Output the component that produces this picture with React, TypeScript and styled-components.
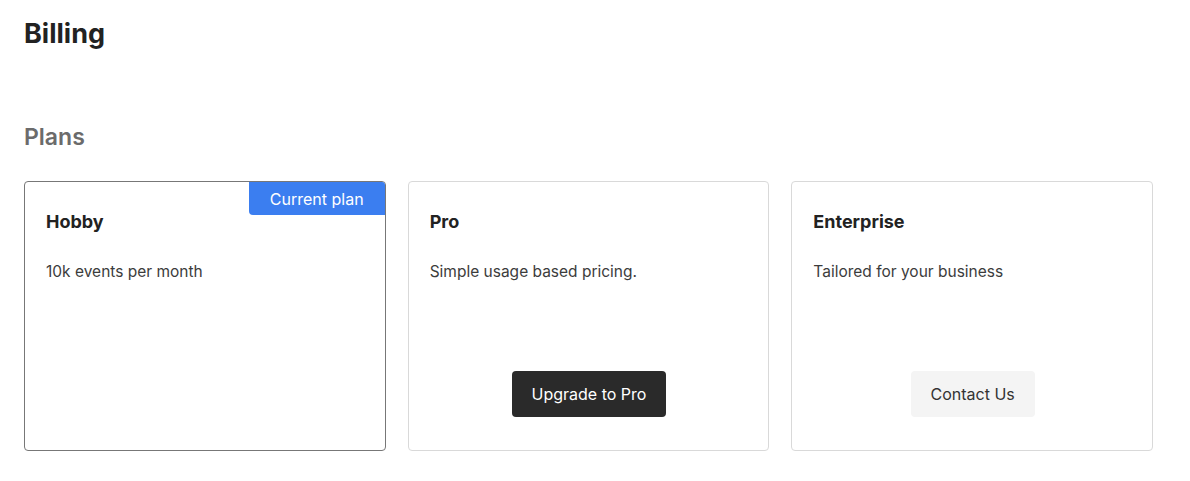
import React from 'react';
import styled, { createGlobalStyle } from 'styled-components';

const GlobalStyle = createGlobalStyle`
  * {
    box-sizing: border-box;
  }
  body {
    margin: 0;
    background: #ffffff;
    font-family: Inter, 'Noto Sans', sans-serif;
    color: #222222;
  }
`;

const Page = styled.main`
  padding: 18px 37px 24px 24px;
`;

const Title = styled.h1`
  margin: 0;
  font-size: 27px;
  font-weight: 700;
  line-height: 32px;
  color: #222222;
`;

const SectionTitle = styled.h2`
  margin: 71px 0 0;
  font-size: 23px;
  font-weight: 600;
  line-height: 32px;
  color: #6b6b6b;
`;

const PlanGrid = styled.div`
  display: grid;
  grid-template-columns: repeat(3, 1fr);
  gap: 22px;
  margin-top: 28px;
`;

const Card = styled.div<{ $current?: boolean }>`
  position: relative;
  display: flex;
  flex-direction: column;
  height: 270px;
  padding: 28px 20px 33px 21px;
  border: 1px solid ${(p) => (p.$current ? '#777777' : '#d9d9d9')};
  border-radius: 4px;
  background: #ffffff;
`;

const Badge = styled.div`
  position: absolute;
  top: 0;
  right: 0;
  padding: 7px 21px 6px 21px;
  background: #3b7ef0;
  color: #ffffff;
  font-size: 16px;
  line-height: 20px;
  border-radius: 0 3px 0 4px;
`;

const PlanName = styled.h3`
  margin: 0;
  font-size: 18px;
  font-weight: 700;
  line-height: 24px;
  color: #222222;
`;

const PlanText = styled.p`
  margin: 27px 0 0;
  font-size: 15.5px;
  line-height: 22px;
  color: #3c3c3c;
`;

const Actions = styled.div`
  margin-top: auto;
  display: flex;
  justify-content: center;
`;

const Button = styled.button<{ $variant: 'dark' | 'light' }>`
  height: 46px;
  padding: 0 20px;
  border: none;
  border-radius: 4px;
  font-family: Inter, 'Noto Sans', sans-serif;
  font-size: 16px;
  cursor: pointer;
  background: ${(p) => (p.$variant === 'dark' ? '#2a2a2a' : '#f4f4f4')};
  color: ${(p) => (p.$variant === 'dark' ? '#ffffff' : '#333333')};
`;

type Plan = {
  name: string;
  text: string;
  current?: boolean;
  action?: { label: string; variant: 'dark' | 'light' };
};

const plans: Plan[] = [
  { name: 'Hobby', text: '10k events per month', current: true },
  {
    name: 'Pro',
    text: 'Simple usage based pricing.',
    action: { label: 'Upgrade to Pro', variant: 'dark' },
  },
  {
    name: 'Enterprise',
    text: 'Tailored for your business',
    action: { label: 'Contact Us', variant: 'light' },
  },
];

const App = (): JSX.Element => (
  <Page>
    <GlobalStyle />
    <Title>Billing</Title>
    <SectionTitle>Plans</SectionTitle>
    <PlanGrid>
      {plans.map((plan) => (
        <Card key={plan.name} $current={plan.current}>
          {plan.current && <Badge>Current plan</Badge>}
          <PlanName>{plan.name}</PlanName>
          <PlanText>{plan.text}</PlanText>
          {plan.action && (
            <Actions>
              <Button $variant={plan.action.variant}>{plan.action.label}</Button>
            </Actions>
          )}
        </Card>
      ))}
    </PlanGrid>
  </Page>
);

export default App;
